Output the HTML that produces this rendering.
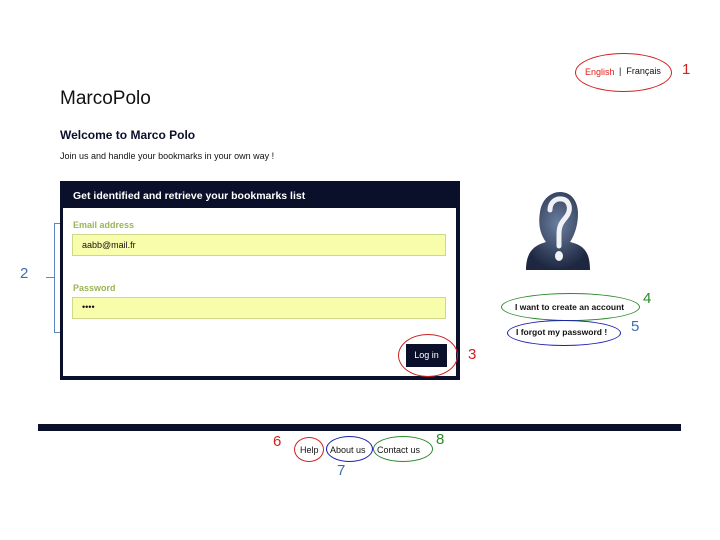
<!DOCTYPE html>
<html><head><meta charset="utf-8"><style>
body{margin:0;width:720px;height:540px;background:#fff;position:relative;overflow:hidden;font-family:"Liberation Sans",Arial,sans-serif;}
.a{position:absolute;}
.ell{position:absolute;border-radius:50%;border:1.3px solid;box-sizing:border-box;}
.num{position:absolute;font-size:15px;}
</style></head><body>
<div class="a" style="left:585px;top:67px;font-size:9px;color:#e02020">English</div>
<div class="a" style="left:619px;top:66px;font-size:9px;color:#111">|&nbsp; Français</div>
<div class="ell" style="left:575px;top:53px;width:97px;height:39px;border-color:#d02020"></div>
<div class="num" style="left:682px;top:61px;color:#d02020">1</div>

<div class="a" style="left:60px;top:88px;font-size:19px;color:#111">MarcoPolo</div>
<div class="a" style="left:60px;top:128px;font-size:12px;font-weight:bold;color:#0a0f2a">Welcome to Marco Polo</div>
<div class="a" style="left:60px;top:151px;font-size:9px;color:#111">Join us and handle your bookmarks in your own way !</div>

<div class="a" style="left:60px;top:181px;width:400px;height:199px;background:#0a0f2a"></div>
<div class="a" style="left:73px;top:190px;font-size:10.5px;font-weight:bold;color:#fff">Get identified and retrieve your bookmarks list</div>
<div class="a" style="left:63px;top:208px;width:393px;height:168px;background:#fff"></div>
<div class="a" style="left:73px;top:220px;font-size:9px;font-weight:bold;color:#9bb556">Email address</div>
<div class="a" style="left:72px;top:234px;width:374px;height:22px;background:#f7fdab;border:1px solid #cfd88a;box-sizing:border-box"></div>
<div class="a" style="left:82px;top:240px;font-size:9px;color:#111">aabb@mail.fr</div>
<div class="a" style="left:73px;top:283px;font-size:9px;font-weight:bold;color:#9bb556">Password</div>
<div class="a" style="left:72px;top:297px;width:374px;height:22px;background:#f7fdab;border:1px solid #cfd88a;box-sizing:border-box"></div>
<div class="a" style="left:82px;top:302px;font-size:9px;color:#111">••••</div>
<div class="a" style="left:406px;top:344px;width:41px;height:23px;background:#0a0f2a;color:#fff;font-size:9px;text-align:center;line-height:23px">Log in</div>
<div class="ell" style="left:398px;top:334px;width:60px;height:43px;border-color:#d02020"></div>
<div class="num" style="left:468px;top:346px;color:#d02020">3</div>

<div class="a" style="left:54px;top:223px;width:6px;height:110px;border:1.3px solid #5b86c4;border-right:none;box-sizing:border-box"></div>
<div class="a" style="left:46px;top:277px;width:8px;height:1px;background:#5b86c4"></div>
<div class="num" style="left:20px;top:265px;color:#3c6fb0">2</div>

<svg class="a" style="left:522px;top:190px" width="72" height="84" viewBox="0 0 72 84">
<defs><radialGradient id="g" cx="50%" cy="40%" r="60%"><stop offset="0" stop-color="#6b7fa0"/><stop offset="1" stop-color="#1d2740"/></radialGradient></defs>
<path d="M4 80 C4 60 14 55 24 52 C18 44 16 34 18 22 C20 8 30 2 38 2 C50 2 56 12 56 24 C56 36 52 46 48 52 C60 55 68 60 68 80 Z" fill="url(#g)"/>
<path d="M28 20 C28 12 34 8 40 9 C47 10 49 18 46 24 C43 30 37 32 37 44 L37 56" stroke="#f0f2f6" stroke-width="5" fill="none" stroke-linecap="round"/>
<ellipse cx="37" cy="66" rx="4" ry="5" fill="#f0f2f6"/>
</svg>

<div class="a" style="left:515px;top:302px;font-size:8.5px;font-weight:bold;color:#111">I want to create an account</div>
<div class="ell" style="left:501px;top:293px;width:139px;height:28px;border-color:#2a8a2a"></div>
<div class="num" style="left:643px;top:290px;color:#2a8a2a">4</div>
<div class="a" style="left:516px;top:327px;font-size:8.5px;font-weight:bold;color:#111">I forgot my password !</div>
<div class="ell" style="left:507px;top:320px;width:114px;height:26px;border-color:#1a20b0"></div>
<div class="num" style="left:631px;top:318px;color:#3c6fb0">5</div>

<div class="a" style="left:38px;top:424px;width:643px;height:7px;background:#0a0f2a"></div>
<div class="a" style="left:300px;top:445px;font-size:9px;color:#111">Help</div>
<div class="ell" style="left:294px;top:437px;width:30px;height:25px;border-color:#d02020"></div>
<div class="a" style="left:330px;top:445px;font-size:9px;color:#111">About us</div>
<div class="ell" style="left:326px;top:436px;width:47px;height:26px;border-color:#1a20b0"></div>
<div class="a" style="left:377px;top:445px;font-size:9px;color:#111">Contact us</div>
<div class="ell" style="left:373px;top:436px;width:60px;height:26px;border-color:#2a8a2a"></div>
<div class="num" style="left:273px;top:433px;color:#d02020">6</div>
<div class="num" style="left:337px;top:462px;color:#3c6fb0">7</div>
<div class="num" style="left:436px;top:431px;color:#2a8a2a">8</div>
</body></html>
